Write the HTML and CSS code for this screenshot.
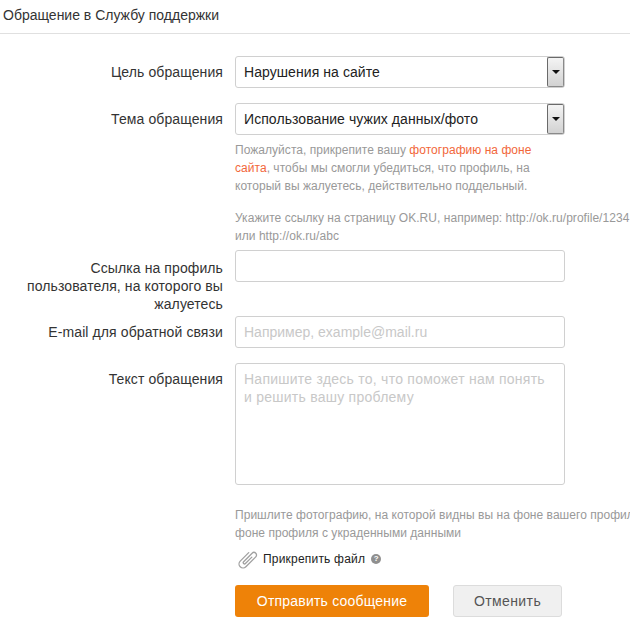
FILE: index.html
```html
<!DOCTYPE html>
<html lang="ru">
<head>
<meta charset="utf-8">
<title>Обращение в Службу поддержки</title>
<link rel="stylesheet" href="styles.css">
</head>
<body>
<h1 class="title">Обращение в Службу поддержки</h1>
<form class="form">
  <div class="row row-select">
    <label class="label">Цель обращения</label>
    <div class="select"><span class="select-value">Нарушения на сайте</span><span class="select-btn"><i class="caret"></i></span></div>
  </div>
  <div class="row row-topic">
    <label class="label">Тема обращения</label>
    <div class="select"><span class="select-value">Использование чужих данных/фото</span><span class="select-btn"><i class="caret"></i></span></div>
  </div>
  <div class="row row-hint">
    <span></span>
    <div class="hint hint-wide">
      <p class="hint-para narrow">Пожалуйста, прикрепите вашу <span class="accent">фотографию на фоне сайта</span>, чтобы мы смогли убедиться, что профиль, на который вы жалуетесь, действительно поддельный.</p>
      <p class="hint-para nowrap">Укажите ссылку на страницу OK.RU, например: http://ok.ru/profile/1234<br>или http://ok.ru/abc</p>
    </div>
  </div>
  <div class="row row-link">
    <label class="label label-tall">Ссылка на профиль пользователя, на которого вы жалуетесь</label>
    <input class="field" type="text">
  </div>
  <div class="row row-mail">
    <label class="label">E-mail для обратной связи</label>
    <input class="field" type="text" placeholder="Например, example@mail.ru">
  </div>
  <div class="row row-text">
    <label class="label">Текст обращения</label>
    <textarea class="field area" placeholder="Напишите здесь то, что поможет нам понять и решить вашу проблему"></textarea>
  </div>
  <div class="row row-photo">
    <span></span>
    <p class="hint nowrap">Пришлите фотографию, на которой видны вы на фоне вашего профиля или на<br>фоне профиля с украденными данными</p>
  </div>
  <div class="row row-attach">
    <span></span>
    <div class="attach">
      <svg class="clip" width="20" height="18" viewBox="0 0 20 18" fill="none" stroke="#a0a0a0" stroke-width="1.3" stroke-linecap="round">
        <path transform="rotate(45 10 9)" d="M6 4 V16 a4 4 0 0 0 8 0 V2 a2.6 2.6 0 0 0 -5.2 0 V14 a1.3 1.3 0 0 0 2.6 0 V5"/>
      </svg>
      <span class="attach-text">Прикрепить файл</span>
      <span class="help">?</span>
    </div>
  </div>
  <div class="row row-actions">
    <span></span>
    <div class="actions">
      <button class="btn btn-primary" type="button">Отправить сообщение</button>
      <button class="btn btn-cancel" type="button">Отменить</button>
    </div>
  </div>
</form>
</body>
</html>
```
FILE: styles.css
```css
* { box-sizing: border-box; }
html, body { margin: 0; padding: 0; height: 634px; overflow: hidden; background: #fff; }
body { font-family: "Liberation Sans", Arial, sans-serif; font-size: 14px; color: #333; width: 630px; }
.title {
  margin: 0;
  height: 34px;
  padding: 7px 0 0 3px;
  font-size: 14px;
  line-height: 16px;
  font-weight: 400;
  color: #333;
  border-bottom: 1px solid #e0e0e0;
}
.form { display: flex; flex-direction: column; padding-top: 22px; }
.row { display: grid; grid-template-columns: 223px 330px; column-gap: 12px; align-items: start; }
.row-topic { margin-top: 15px; }
.row-hint { margin-top: 6px; }
.row-link { margin-top: 5px; }
.row-mail { margin-top: 3px; }
.row-text { margin-top: 15px; }
.row-photo { margin-top: 21px; }
.row-attach { margin-top: 8px; }
.row-actions { margin-top: 17px; }
.label { display: block; text-align: right; line-height: 18px; padding-top: 7px; color: #333; letter-spacing: 0.1px; }
.label-tall { padding-top: 9px; }
.select {
  display: flex;
  align-items: stretch;
  height: 32px;
  border: 1px solid #d0d0d0;
  border-radius: 3px;
  background: #fff;
}
.select-value { flex: 1; padding-left: 8px; line-height: 30px; color: #222; letter-spacing: 0.07px; }
.select-btn {
  display: flex;
  align-items: center;
  justify-content: center;
  width: 17px;
  border: 1px solid #6a6a6a;
  border-bottom-color: #8a8a8a;
  border-right-color: #8a8a8a;
  border-radius: 2px;
  background: linear-gradient(#f4f4f4, #d2d2d2);
}
.caret { width: 0; height: 0; border-left: 4px solid transparent; border-right: 4px solid transparent; border-top: 4px solid #111; }
.hint { margin: 0; font-size: 12px; line-height: 18px; color: #999; letter-spacing: 0.04px; }
.hint-wide { width: 395px; }
.hint-para { margin: 0 0 14px; }
.hint-para:last-child { margin-bottom: 0; }
.narrow { width: 300px; }
.nowrap { white-space: nowrap; }
.accent { color: #f2673a; }
.field {
  display: block;
  width: 330px;
  height: 32px;
  padding: 0 8px;
  border: 1px solid #d0d0d0;
  border-radius: 3px;
  background: #fff;
  font-family: "Liberation Sans", Arial, sans-serif;
  font-size: 14px;
  color: #333;
  outline: none;
}
.field::placeholder { color: #c8c8c8; opacity: 1; }
.area { height: 122px; padding: 6px 14px 6px 8px; line-height: 18px; resize: none; letter-spacing: 0.25px; }
.attach { display: flex; align-items: center; height: 18px; font-size: 12px; color: #222; }
.attach-text { letter-spacing: 0.2px; }
.clip { margin: 0 5px 0 3px; overflow: visible; }
.help {
  width: 10px;
  height: 10px;
  margin-left: 6px;
  border-radius: 50%;
  background: #8f8f8f;
  color: #fff;
  font-size: 8px;
  line-height: 10px;
  font-weight: 700;
  text-align: center;
}
.actions { display: flex; gap: 24px; }
.btn {
  height: 32px;
  border-radius: 3px;
  font-family: "Liberation Sans", Arial, sans-serif;
  font-size: 14px;
  padding: 0;
}
.btn-primary { width: 194px; border: 0; background: #ee8208; color: #fff; letter-spacing: 0.2px; }
.btn-cancel { width: 109px; border: 1px solid #dcdcdc; background: #f0f0f0; color: #555; letter-spacing: 0.4px; }
```
